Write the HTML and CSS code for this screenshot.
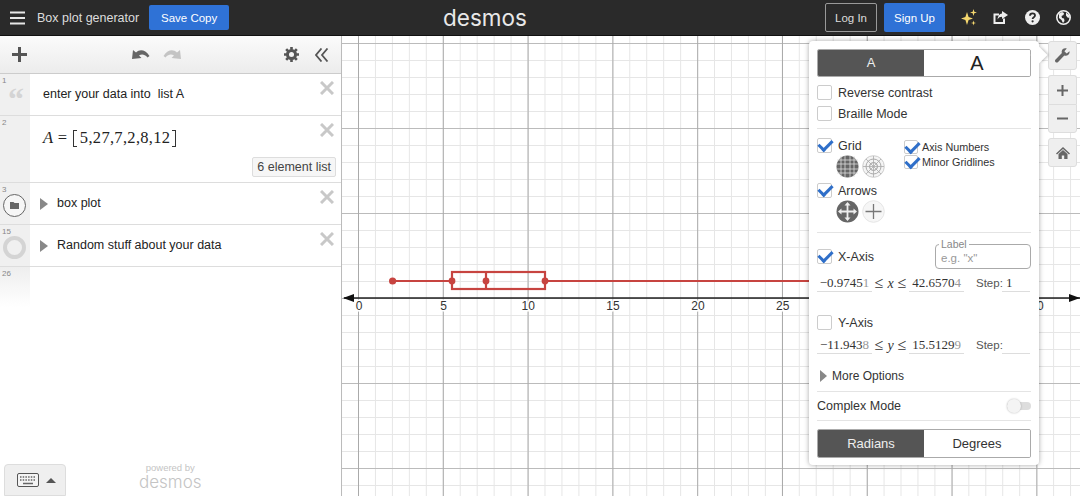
FILE: index.html
```html
<!DOCTYPE html>
<html lang="en">
<head>
    <meta charset="UTF-8">
    <title>Box plot generator</title>
    <link rel="stylesheet" href="styles.css">
</head>
<body>
    <header class="topbar">
        <div class="top-left">
            <svg class="burger" width="16" height="14" viewBox="0 0 16 14"><path d="M0 1.500h15M0 7h15M0 12.500h15" stroke="#e6e6e6" stroke-width="2"/></svg>
            <span class="doc-title">Box plot generator</span>
            <button class="btn-blue save">Save Copy</button>
        </div>
        <div class="logo">desmos</div>
        <div class="top-right">
            <button class="btn-outline">Log In</button>
            <button class="btn-blue signup">Sign Up</button>
            <svg class="stars" width="16" height="18" viewBox="0 0 16 18"><path d="M6 3l1.600 5 4.400 1.500-4.400 1.500L6 16l-1.600-5L0 9.500 4.400 8zM12.500 0l.8 2.700 2.700.8-2.700.8-.8 2.700-.8-2.700L9 3.500l2.700-.8zM12.500 11.500l.6 1.900 1.900.6-1.900.6-.6 1.900-.6-1.900L10 14l1.900-.6z" fill="#f5d76e"/></svg>
            <svg class="share" width="15" height="14" viewBox="0 0 15 14"><path d="M11 7.500V12H1.500V3.500H6" fill="none" stroke="#eee" stroke-width="2"/><path d="M9 0l6 4-6 4V5.800C7 5.800 5.500 6.500 4.500 8.500 4.700 5 6.500 2.700 9 2.400z" fill="#eee"/></svg>
            <svg class="help" width="15" height="15" viewBox="0 0 15 15"><circle cx="7.500" cy="7.500" r="7.500" fill="#eee"/><path d="M5 5.800C5 4.300 6.100 3.400 7.500 3.400S10 4.300 10 5.600C10 7.200 7.600 7.300 7.600 9" fill="none" stroke="#2a2a2a" stroke-width="1.800"/><circle cx="7.600" cy="11.300" r="1.100" fill="#2a2a2a"/></svg>
            <svg class="globe" width="15" height="15" viewBox="0 0 15 15"><circle cx="7.500" cy="7.500" r="6.700" fill="#2a2a2a" stroke="#eee" stroke-width="1.600"/><path d="M3 3.500l3-1.500 2 1-.5 2-2 1 .5 2 2 .5.500 2.500-1.500 2-1.500-3-2.500-2zM10 2.500l3 2.500.8 3-2.300-.5-1.500-2z" fill="#eee"/></svg>
        </div>
    </header>

    <main class="app">
        <aside class="exp-panel">
            <div class="exp-toolbar">
                <svg width="15" height="15" viewBox="0 0 15 15"><path d="M7.500 0v15M0 7.500h15" stroke="#555" stroke-width="3"/></svg>
                <div class="undo-redo">
                    <svg width="18" height="11" viewBox="0 0 18 11"><path d="M0 10L1 1l3 2.500C8 0 13 .5 17.500 7l-2 1.500C12.500 5 9.500 5 7 6.500L9.500 9z" fill="#666"/></svg>
                    <svg width="18" height="11" viewBox="0 0 18 11"><path d="M18 10L17 1l-3 2.500C10 0 5 .5 .5 7l2 1.500C5.500 5 8.500 5 11 6.500L8.500 9z" fill="#c4c4c4"/></svg>
                </div>
                <div class="tool-right">
                    <svg width="15" height="15" viewBox="0 0 16 16"><circle cx="8" cy="8" r="4.300" fill="none" stroke="#555" stroke-width="3.200"/><path d="M8 0v3M8 13v3M0 8h3M13 8h3M2.300 2.300l2.100 2.100M11.600 11.600l2.100 2.100M2.300 13.700l2.100-2.100M11.600 4.400l2.100-2.100" stroke="#555" stroke-width="2.800"/></svg>
                    <svg width="14" height="14" viewBox="0 0 14 14"><path d="M6.500 .5L1 7l5.500 6.500M12.500 .5L7 7l5.500 6.500" fill="none" stroke="#555" stroke-width="1.800"/></svg>
                </div>
            </div>

            <div class="exp-row row-note">
                <div class="gutter"><span class="num">1</span><span class="quote">&ldquo;</span></div>
                <div class="exp-body note-text">enter your data into&nbsp; list A</div>
                <svg class="del" width="14" height="14" viewBox="0 0 14 14"><path d="M1 1l12 12M13 1L1 13" stroke="#c8c8c8" stroke-width="3"/></svg>
            </div>
            <div class="exp-row row-math">
                <div class="gutter"><span class="num">2</span></div>
                <div class="exp-body math"><i>A</i> = <span class="bracket open"></span>5,27,7,2,8,12<span class="bracket close"></span></div>
                <svg class="del" width="14" height="14" viewBox="0 0 14 14"><path d="M1 1l12 12M13 1L1 13" stroke="#c8c8c8" stroke-width="3"/></svg>
                <div class="elem-count">6 element list</div>
            </div>
            <div class="exp-row row-folder">
                <div class="gutter">
                    <span class="num">3</span>
                    <span class="folder-ring dark"><svg width="9" height="7" viewBox="0 0 9 7"><path d="M0 0h3.500l1 1H9v6H0z" fill="#666"/></svg></span>
                </div>
                <div class="exp-body folder-text"><span class="tri"></span>box plot</div>
                <svg class="del" width="14" height="14" viewBox="0 0 14 14"><path d="M1 1l12 12M13 1L1 13" stroke="#c8c8c8" stroke-width="3"/></svg>
            </div>
            <div class="exp-row row-folder">
                <div class="gutter">
                    <span class="num">15</span>
                    <span class="folder-ring light"></span>
                </div>
                <div class="exp-body folder-text"><span class="tri"></span>Random stuff about your data</div>
                <svg class="del" width="14" height="14" viewBox="0 0 14 14"><path d="M1 1l12 12M13 1L1 13" stroke="#c8c8c8" stroke-width="3"/></svg>
            </div>
            <div class="exp-empty">
                <div class="gutter-fade"><span class="num">26</span></div>
            </div>

            <div class="exp-foot">
                <button class="kbd-btn">
                    <svg width="22" height="14" viewBox="0 0 22 14"><rect x=".5" y=".5" width="21" height="13" rx="1.500" fill="#f4f4f4" stroke="#555"/><path d="M3 4h16M3 7h16" stroke="#666" stroke-width="1.500" stroke-dasharray="1.500 1.200"/><path d="M6 10.500h10" stroke="#666" stroke-width="1.500"/></svg>
                    <span class="caret-up"></span>
                </button>
                <div class="powered"><span class="pw-small">powered by</span><span class="pw-logo">desmos</span></div>
            </div>
        </aside>

        <section class="graph">
            <svg class="plot" width="738" height="460" viewBox="342 36 738 460">
                <path d="M344 298H1080" stroke="#222" stroke-width="1.500"/>
                <path d="M343 298l11-4v8zM1080 298l-11-4v8z" fill="#111"/>
                <g class="ticks">
                    <text x="359" y="310">0</text>
                    <text x="443.500" y="310">5</text>
                    <text x="528.300" y="310">10</text>
                    <text x="613" y="310">15</text>
                    <text x="698" y="310">20</text>
                    <text x="782.800" y="310">25</text>
                    <text x="1037" y="310">40</text>
                </g>
                <g fill="none" stroke="#c74440" stroke-width="2.200">
                    <path d="M392.600 281H452M545 281H1000"/>
                    <rect x="452" y="272" width="93" height="17"/>
                    <path d="M486 272V289"/>
                </g>
                <g fill="#c74440">
                    <circle cx="392.600" cy="281" r="3.600"/>
                    <circle cx="452" cy="281" r="3.400"/>
                    <circle cx="486" cy="281" r="3.400"/>
                    <circle cx="545" cy="281" r="3.400"/>
                </g>
            </svg>

            <div class="side-btns">
                <button class="gbtn wrench">
                    <svg width="15" height="15" viewBox="0 0 15 15"><path d="M14.500 3.200l-2.800 2.400-2.300-2.300L11.800.6C9.500-.4 7 1 6.700 3.300c-.1.700 0 1.300.2 1.800L.6 11.400c-.8.900-.8 1.900-.1 2.600s1.800.7 2.600-.1l6.200-6.300c2.800 1 6-1.500 5.200-4.400z" fill="#666"/></svg>
                </button>
                <div class="zoom-group">
                    <button class="gbtn"><svg width="11" height="11" viewBox="0 0 11 11"><path d="M5.500 0v11M0 5.500h11" stroke="#666" stroke-width="2"/></svg></button>
                    <button class="gbtn"><svg width="11" height="11" viewBox="0 0 11 11"><path d="M0 5.500h11" stroke="#666" stroke-width="2"/></svg></button>
                </div>
                <button class="gbtn">
                    <svg width="14" height="12" viewBox="0 0 14 12"><path d="M7 0l7 6.500-1 1-6-5.500-6 5.500-1-1z" fill="#666"/><path d="M2.500 7L7 3l4.500 4v5H8.200V8.500H5.800V12H2.500z" fill="#666"/></svg>
                </button>
            </div>

            <div class="settings">
                <span class="settings-arrow"></span>
                <div class="seg seg-size">
                    <div class="seg-item active small-a">A</div>
                    <div class="seg-item big-a">A</div>
                </div>
                <div class="check-line first"><span class="cb"></span>Reverse contrast</div>
                <div class="check-line"><span class="cb"></span>Braille Mode</div>
                <hr class="rule rule-a">

                <div class="grid-opts">
                    <div class="grid-col">
                        <div class="check-line tight"><span class="cb on"></span>Grid</div>
                        <div class="icon-pair">
                            <svg width="23" height="23" viewBox="0 0 23 23"><circle cx="11.500" cy="11.500" r="11" fill="#666"/><path d="M5 1v21M9 0v23M14 0v23M18 1v21M1 5h21M0 9h23M0 14h23M1 18h21" stroke="#ddd" stroke-width=".8"/></svg>
                            <svg width="23" height="23" viewBox="0 0 23 23"><circle cx="11.500" cy="11.500" r="10.800" fill="#f4f4f4" stroke="#ccc"/><circle cx="11.500" cy="11.500" r="7.500" fill="none" stroke="#aaa"/><circle cx="11.500" cy="11.500" r="4" fill="none" stroke="#999"/><path d="M11.500 1v21M1 11.500h21M4 4l15 15M19 4L4 19" stroke="#aaa" stroke-width=".8"/></svg>
                        </div>
                        <div class="check-line tight arrows-line"><span class="cb on"></span>Arrows</div>
                        <div class="icon-pair">
                            <svg width="23" height="23" viewBox="0 0 23 23"><circle cx="11.500" cy="11.500" r="11" fill="#666"/><path d="M11.500 5v13M5 11.500h13" stroke="#eee" stroke-width="1.800"/><path d="M11.500 2l3 3.500h-6zM11.500 21l3-3.500h-6zM2 11.500l3.500-3v6zM21 11.500l-3.500-3v6z" fill="#eee"/></svg>
                            <svg width="23" height="23" viewBox="0 0 23 23"><circle cx="11.500" cy="11.500" r="10.800" fill="#f6f6f6" stroke="#e6e6e6"/><path d="M11.500 4v15M3.500 11.500h16" stroke="#777" stroke-width="1.300"/></svg>
                        </div>
                    </div>
                    <div class="grid-col right">
                        <div class="check-line mini"><span class="cb on sm"></span>Axis Numbers</div>
                        <div class="check-line mini"><span class="cb on sm"></span>Minor Gridlines</div>
                    </div>
                </div>
                <hr class="rule rule-b">

                <div class="axis-head">
                    <div class="check-line tight axis-name"><span class="cb on"></span>X-Axis</div>
                    <div class="label-box"><span class="label-tag">Label</span>e.g. "x"</div>
                </div>
                <div class="bounds">
                    <span class="bound">&minus;0.9745<span class="fade">1</span></span>
                    <span class="rel">&le; <i>x</i> &le;</span>
                    <span class="bound">42.6570<span class="fade">4</span></span>
                    <span class="step-lab">Step:</span>
                    <span class="bound step">1</span>
                </div>

                <div class="axis-head y-head">
                    <div class="check-line tight axis-name"><span class="cb"></span>Y-Axis</div>
                </div>
                <div class="bounds">
                    <span class="bound">&minus;11.943<span class="fade">8</span></span>
                    <span class="rel">&le; <i>y</i> &le;</span>
                    <span class="bound">15.5129<span class="fade">9</span></span>
                    <span class="step-lab">Step:</span>
                    <span class="bound step"></span>
                </div>

                <div class="more"><span class="tri small"></span>More Options</div>
                <hr class="rule rule-c">
                <div class="complex"><span>Complex Mode</span><span class="switch"><span class="knob"></span></span></div>
                <hr class="rule rule-d">
                <div class="seg seg-angle">
                    <div class="seg-item active">Radians</div>
                    <div class="seg-item">Degrees</div>
                </div>
            </div>
        </section>
    </main>
</body>
</html>
```

FILE: styles.css
```css
* {
    box-sizing: border-box;
}
html, body {
    margin: 0;
    height: 100%;
    overflow: hidden;
}
body {
    font-family: "Liberation Sans", Arial, sans-serif;
    color: #222;
    background: #fff;
}
button {
    font-family: inherit;
    cursor: pointer;
}

/* top bar */
.topbar {
    height: 36px;
    background: #2a2a2a;
    border-bottom: 1px solid #111;
    display: grid;
    grid-template-columns: 433px auto 1fr;
    align-items: center;
    padding: 0 9px 0 10px;
}
.top-left, .top-right {
    display: flex;
    align-items: center;
}
.top-right {
    justify-content: flex-end;
}
.doc-title {
    color: #ddd;
    font-size: 12.500px;
    margin-left: 11px;
}
.btn-blue {
    background: #2f72d6;
    color: #fff;
    border: 0;
    border-radius: 2px;
    font-size: 11.500px;
}
.save {
    width: 80px;
    height: 25px;
    margin-left: 10px;
}
.logo {
    color: #e8e8e8;
    font-family: "Inter", sans-serif;
    font-weight: 400;
    font-size: 22.500px;
    line-height: 35px;
}
.btn-outline {
    width: 52px;
    height: 29px;
    background: transparent;
    color: #ddd;
    border: 1px solid #999;
    border-radius: 2px;
    font-size: 11.500px;
}
.signup {
    width: 61px;
    height: 29px;
    margin-left: 7px;
}
.stars {
    margin-left: 16px;
}
.share {
    margin-left: 16px;
}
.help {
    margin-left: 17px;
}
.globe {
    margin-left: 16px;
}

/* layout */
.app {
    display: flex;
    height: 460px;
}

/* expression list */
.exp-panel {
    width: 342px;
    border-right: 1px solid #bbb;
    display: flex;
    flex-direction: column;
    position: relative;
    background: #fff;
    flex: none;
}
.exp-toolbar {
    height: 38px;
    background: linear-gradient(#fbfbfb, #ececec);
    border-bottom: 1px solid #ccc;
    display: flex;
    align-items: center;
    justify-content: space-between;
    padding: 0 12px;
    flex: none;
}
.undo-redo {
    display: flex;
    gap: 13px;
    margin-left: 1px;
}
.tool-right {
    display: flex;
    align-items: center;
    gap: 16px;
}
.exp-row {
    position: relative;
    display: flex;
    border-bottom: 1px solid #ddd;
    flex: none;
}
.row-note, .row-folder {
    height: 42px;
}
.row-math {
    height: 67px;
}
.gutter {
    width: 30px;
    background: #f0f0f0;
    position: relative;
    flex: none;
}
.num, .gutter-fade .num {
    position: absolute;
    left: 2px;
    top: 2px;
    font-size: 8px;
    color: #888;
}
.quote {
    position: absolute;
    left: 8px;
    top: 9px;
    font-family: "Liberation Serif", serif;
    font-weight: bold;
    font-size: 32px;
    line-height: 32px;
    color: #d4d4d4;
}
.exp-body {
    padding-left: 13px;
    font-size: 12.500px;
    line-height: 41px;
    color: #222;
}
.math {
    font-family: "Liberation Serif", serif;
    font-size: 16.500px;
    letter-spacing: 0.3px;
    line-height: 44px;
}
.bracket {
    display: inline-block;
    width: 4px;
    height: 17px;
    vertical-align: -4px;
    border: solid #333;
    border-width: 1px 0;
}
.bracket.open {
    border-left-width: 1px;
    margin: 0 3px 0 1px;
}
.bracket.close {
    border-right-width: 1px;
    margin: 0 0 0 2px;
}
.del {
    position: absolute;
    right: 7px;
    top: 7px;
}
.elem-count {
    position: absolute;
    right: 5px;
    bottom: 5px;
    padding: 0 4px;
    height: 20px;
    line-height: 19px;
    font-size: 12.500px;
    color: #444;
    background: #f6f6f6;
    border: 1px solid #ddd;
    border-radius: 2px;
}
.folder-ring {
    position: absolute;
    left: 3px;
    top: 11px;
    width: 23px;
    height: 23px;
    border-radius: 50%;
    display: flex;
    align-items: center;
    justify-content: center;
    background: #f6f6f6;
}
.folder-ring.dark {
    border: 1.500px solid #666;
}
.folder-ring.light {
    border: 4px solid #d4d4d4;
    background: #f0f0f0;
}
.folder-text {
    padding-left: 10px;
    display: flex;
    align-items: center;
}
.tri {
    display: inline-block;
    width: 0;
    height: 0;
    border-left: 8px solid #888;
    border-top: 6.500px solid transparent;
    border-bottom: 6.500px solid transparent;
    margin-right: 9px;
}
.tri.small {
    border-left-width: 7px;
    border-top-width: 6px;
    border-bottom-width: 6px;
    margin-right: 5px;
}
.exp-empty {
    flex: 1;
}
.gutter-fade {
    position: relative;
    width: 30px;
    height: 40px;
    background: linear-gradient(#eee, #fff);
}
.exp-foot {
    height: 33px;
    display: flex;
    align-items: flex-end;
    padding-left: 4px;
    flex: none;
}
.kbd-btn {
    width: 62px;
    height: 32px;
    display: flex;
    align-items: center;
    gap: 7px;
    padding: 0 0 0 12px;
    background: #efefef;
    border: 1px solid #ddd;
    border-radius: 4px 4px 0 0;
}
.caret-up {
    width: 0;
    height: 0;
    border-left: 5px solid transparent;
    border-right: 5px solid transparent;
    border-bottom: 5px solid #555;
}
.powered {
    display: flex;
    flex-direction: column;
    align-items: center;
    margin-left: 73px;
    margin-bottom: 5px;
    color: #c4c4c4;
}
.pw-small {
    font-size: 9.500px;
    line-height: 10px;
}
.pw-logo {
    font-family: "Inter", sans-serif;
    font-weight: 300;
    font-size: 17px;
    line-height: 18px;
}

/* graph paper */
.graph {
    flex: 1;
    position: relative;
    overflow: hidden;
    background-color: #fff;
    background-image:
        linear-gradient(to right, #aaa 1px, transparent 1px),
        linear-gradient(to bottom, #bbb 1px, transparent 1px),
        linear-gradient(to right, #e6e6e6 1px, transparent 1px),
        linear-gradient(to bottom, #e6e6e6 1px, transparent 1px);
    background-size: 84.800px 85px, 84.800px 85px, 16.960px 17px, 16.960px 17px;
    background-position: 16px 7px, 16px 7px, 16px 7px, 16px 7px;
}
.plot {
    position: absolute;
    left: 0;
    top: 0;
}
.ticks text {
    font-size: 12px;
    fill: #333;
    text-anchor: middle;
    font-family: "Liberation Sans", Arial, sans-serif;
    paint-order: stroke;
    stroke: #fff;
    stroke-width: 3px;
}

/* right side buttons */
.side-btns {
    position: absolute;
    left: 706px;
    top: 5px;
    width: 29px;
    display: flex;
    flex-direction: column;
    gap: 5px;
}
.gbtn {
    width: 29px;
    height: 29px;
    padding: 0;
    display: flex;
    align-items: center;
    justify-content: center;
    background: #efefef;
    border: 1px solid #ddd;
    border-radius: 3px;
}
.zoom-group {
    display: flex;
    flex-direction: column;
}
.zoom-group .gbtn:first-child {
    border-radius: 3px 3px 0 0;
    border-bottom: 0;
}
.zoom-group .gbtn:last-child {
    border-radius: 0 0 3px 3px;
}

/* settings popover */
.settings {
    position: absolute;
    left: 467px;
    top: 5px;
    width: 230px;
    height: 424px;
    padding: 8px;
    background: #fff;
    border-radius: 4px;
    box-shadow: 0 0 5px rgba(0, 0, 0, 0.35);
    font-size: 12.500px;
    color: #333;
}
.settings-arrow {
    position: absolute;
    right: -6px;
    top: 8px;
    width: 12px;
    height: 12px;
    background: #fff;
    transform: rotate(45deg);
    box-shadow: 2px -2px 3px -1px rgba(0, 0, 0, 0.25);
}
.seg {
    display: flex;
    border: 1px solid #aaa;
    border-radius: 2px;
    overflow: hidden;
}
.seg-item {
    flex: 1;
    text-align: center;
    background: #fff;
}
.seg-item.active {
    background: #555;
    color: #eee;
}
.seg-size {
    height: 28px;
    line-height: 26px;
}
.small-a {
    font-size: 13px;
}
.big-a {
    font-size: 20px;
    color: #222;
}
.check-line {
    display: flex;
    align-items: center;
    height: 21px;
}
.check-line.first {
    margin-top: 5px;
}
.cb {
    position: relative;
    width: 15px;
    height: 15px;
    border: 1px solid #ccc;
    border-radius: 2px;
    margin-right: 6px;
    background: #fff;
    flex: none;
}
.cb.on::after {
    content: "";
    position: absolute;
    left: 3px;
    top: -2px;
    width: 6px;
    height: 11px;
    border-right: 3px solid #2f6fc9;
    border-bottom: 3px solid #2f6fc9;
    transform: rotate(45deg);
}
.cb.sm {
    width: 14px;
    height: 14px;
    margin-right: 4px;
}
.rule {
    border: 0;
    border-top: 1px solid #e4e4e4;
    margin: 0;
}
.rule-a {
    margin-top: 4px;
}
.rule-b {
    margin-top: 9px;
}
.rule-c {
    margin-top: 5px;
}
.grid-opts {
    display: flex;
    margin-top: 8px;
}
.grid-col {
    width: 87px;
}
.grid-col.right {
    width: auto;
    padding-top: 2px;
}
.check-line.tight {
    height: 17px;
}
.check-line.mini {
    height: 15px;
    font-size: 10.800px;
}
.icon-pair {
    display: flex;
    gap: 3px;
    margin: 1px 0 0 19px;
}
.arrows-line {
    margin-top: 4px;
}
.axis-head {
    display: flex;
    justify-content: space-between;
    align-items: center;
    margin-top: 11px;
}
.label-box {
    position: relative;
    width: 96px;
    height: 25px;
    border: 1px solid #aaa;
    border-radius: 4px;
    padding: 5px 5px 0;
    font-size: 11.500px;
    color: #999;
    line-height: 16px;
}
.label-tag {
    position: absolute;
    left: 3px;
    top: -7px;
    padding: 0 2px;
    background: #fff;
    color: #888;
    font-size: 10.500px;
    line-height: 12px;
}
.bounds {
    display: flex;
    align-items: flex-end;
    margin-top: 6px;
    height: 17px;
}
.bound {
    width: 55px;
    height: 17px;
    border-bottom: 1px solid #ddd;
    font-family: "Liberation Serif", serif;
    font-size: 13px;
    line-height: 16px;
    text-align: center;
    white-space: nowrap;
}
.fade {
    color: #999;
}
.rel {
    width: 37px;
    text-align: center;
    font-family: "Liberation Serif", serif;
    font-size: 16px;
    line-height: 16px;
    white-space: nowrap;
}
.rel i {
    font-size: 14px;
}
.step-lab {
    margin-left: 12px;
    width: 26px;
    font-size: 11.500px;
    line-height: 17px;
    color: #555;
}
.bound.step {
    width: 28px;
    text-align: left;
    padding-left: 4px;
}
.y-head {
    margin-top: 22px;
}
.more {
    display: flex;
    align-items: center;
    margin: 12px 0 0 3px;
    height: 20px;
    font-size: 12px;
}
.complex {
    display: flex;
    justify-content: space-between;
    align-items: center;
    height: 28px;
}
.switch {
    position: relative;
    width: 24px;
    height: 8px;
    background: #ddd;
    border-radius: 4px;
}
.knob {
    position: absolute;
    left: 0;
    top: -3px;
    width: 14px;
    height: 14px;
    border-radius: 50%;
    background: #f4f4f4;
    box-shadow: 0 0 2px rgba(0, 0, 0, 0.3);
}
.seg-angle {
    height: 29px;
    line-height: 27px;
    margin-top: 8px;
    font-size: 13px;
}
```
